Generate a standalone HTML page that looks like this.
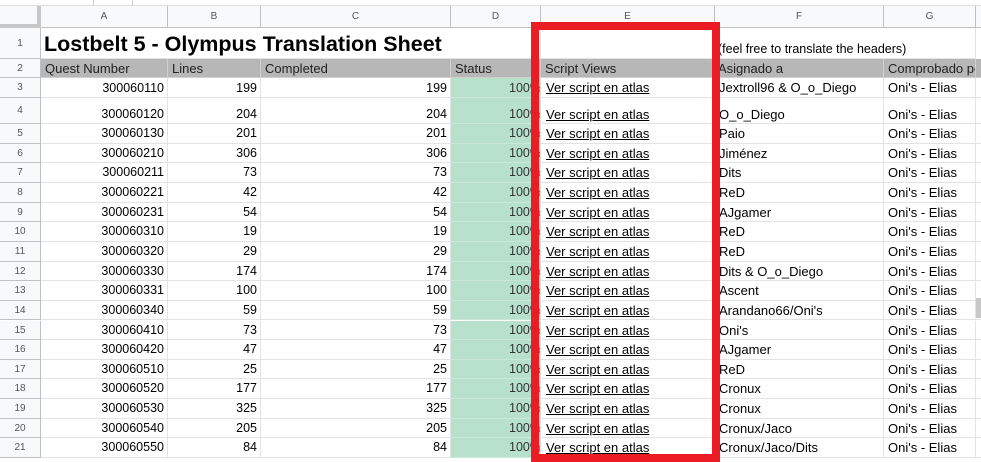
<!DOCTYPE html>
<html><head><meta charset="utf-8"><style>
*{margin:0;padding:0;box-sizing:border-box}
body{width:981px;height:460px;overflow:hidden;background:#fff;font-family:"Liberation Sans",Arial,sans-serif;font-size:13px;color:#000;position:relative}
.a{position:absolute;overflow:hidden;white-space:nowrap}
.ch{position:absolute;top:6px;height:22px;background:#f8f9fa;color:#555;font-size:10px;text-align:center;line-height:22px;border-right:1px solid #c0c0c0;border-bottom:1px solid #c0c0c0}
.rh{position:absolute;left:0;width:41px;background:#f8f9fa;color:#555;font-size:10px;text-align:center;border-bottom:1px solid #c0c0c0;border-right:1px solid #c0c0c0}
.c{position:absolute;overflow:hidden;white-space:nowrap;border-right:1px solid #e2e3e3;border-bottom:1px solid #e2e3e3;padding:0 3px}
.r{text-align:right;font-size:12.5px}
u{text-decoration:underline}
</style></head><body>
<div class="a" style="left:0;top:0;width:981px;height:6px;background:#fff;border-bottom:1px solid #ddd"></div>
<div class="a" style="left:93px;top:0;width:40px;height:6px;border-left:1px solid #ccc;border-right:1px solid #ccc"></div>
<div class="a" style="left:0;top:6px;width:41px;height:22px;background:#f8f9fa;border-right:4px solid #c8c8c8;border-bottom:4px solid #c8c8c8"></div>
<div class="ch" style="left:41px;width:127px">A</div>
<div class="ch" style="left:168px;width:93px">B</div>
<div class="ch" style="left:261px;width:190px">C</div>
<div class="ch" style="left:451px;width:90px">D</div>
<div class="ch" style="left:541px;width:174px">E</div>
<div class="ch" style="left:715px;width:169px">F</div>
<div class="ch" style="left:884px;width:92px">G</div>
<div class="ch" style="left:976px;width:10px"></div>
<div id="g"></div>
<script>
var rows=[
["300060110","199","Jextroll96 & O_o_Diego"],
["300060120","204","O_o_Diego"],
["300060130","201","Paio"],
["300060210","306","Jiménez"],
["300060211","73","Dits"],
["300060221","42","ReD"],
["300060231","54","AJgamer"],
["300060310","19","ReD"],
["300060320","29","ReD"],
["300060330","174","Dits & O_o_Diego"],
["300060331","100","Ascent"],
["300060340","59","Arandano66/Oni's"],
["300060410","73","Oni's"],
["300060420","47","AJgamer"],
["300060510","25","ReD"],
["300060520","177","Cronux"],
["300060530","325","Cronux"],
["300060540","205","Cronux/Jaco"],
["300060550","84","Cronux/Jaco/Dits"]];
var h='';
function rh(n,t,hh){h+='<div class="rh" style="top:'+t+'px;height:'+hh+'px;line-height:'+hh+'px">'+n+'</div>';}
rh(1,28,31);rh(2,59,19);
h+='<div class="c" style="left:41px;top:28px;width:410px;height:31px;font-weight:bold;font-size:21.5px;line-height:33px;border-right:none">Lostbelt 5 - Olympus Translation Sheet</div>';
h+='<div class="c" style="left:451px;top:28px;width:90px;height:31px"></div><div class="c" style="left:541px;top:28px;width:174px;height:31px"></div>';
h+='<div class="c" style="left:715px;top:28px;width:261px;height:31px;line-height:42px;font-size:12.5px;padding:0 3px">(feel free to translate the headers)</div>';
var hd=[[41,127,"Quest Number"],[168,93,"Lines"],[261,190,"Completed"],[451,90,"Status"],[541,174,"Script Views"],[715,169,"Asignado a"],[884,92,"Comprobado po"],[976,10,""]];
hd.forEach(function(x){h+='<div class="c" style="left:'+x[0]+'px;top:59px;width:'+x[1]+'px;height:19px;line-height:19px;background:#b7b7b7;border-color:#d0d0d0;color:#222;padding:0 '+(x[0]==715?3:4)+'px">'+x[2]+'</div>';});
var t=78;
rows.forEach(function(r,i){
 var hh=i==0?20:(i==1?26:19.65);
 var st='top:'+t+'px;height:'+hh+'px;line-height:'+(i==1?19:hh)+'px;'+(i==1?'padding-top:7px;':'');
 rh(i+3,t,hh);
 h+='<div class="c r" style="left:41px;width:127px;'+st+'">'+r[0]+'</div>';
 h+='<div class="c r" style="left:168px;width:93px;'+st+'">'+r[1]+'</div>';
 h+='<div class="c r" style="left:261px;width:190px;'+st+'">'+r[1]+'</div>';
 h+='<div class="c" style="left:451px;width:90px;'+st+'background:#b7e1cd;border-color:#c9e8d9;color:#333;font-size:12.5px"><span style="position:absolute;left:58px">100%</span></div>';
 h+='<div class="c" style="left:541px;width:174px;'+st+'padding-left:5px"><u>Ver script en atlas</u></div>';
 h+='<div class="c" style="left:715px;width:169px;'+st+'padding-left:4px">'+r[2]+'</div>';
 h+='<div class="c" style="left:884px;width:92px;'+st+'padding-left:4px">Oni\'s - Elias</div>';
 h+='<div class="c" style="left:976px;width:10px;'+st+'"></div>';
 t+=hh;
});
h+='<div class="a" style="left:976px;top:298px;width:5px;height:20px;background:#c8c8c8"></div>';
h+='<div class="a" style="left:531px;top:22px;width:189px;height:440px;border:8px solid #ec1c24"></div>';
document.getElementById('g').innerHTML=h;
</script>
</body></html>
